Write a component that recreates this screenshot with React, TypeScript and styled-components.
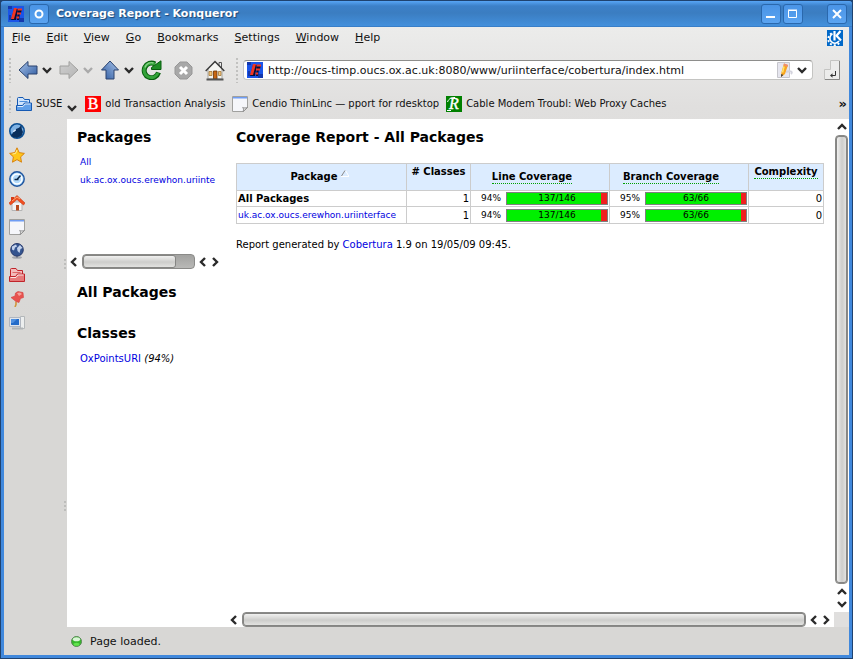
import React from "react";
import styled, { createGlobalStyle, css } from "styled-components";

const Global = createGlobalStyle`
  * { box-sizing: border-box; }
  body { margin: 0; font-family: "DejaVu Sans", sans-serif; font-size: 11px; color: #111; }
  button, input { font: inherit; color: inherit; }
  svg { display: block; flex: none; }
`;

const Desktop = styled.div`
  min-height: 100vh;
  display: flex;
  background: #1f426f;
  padding: 1px;
`;
const Window = styled.div`
  flex: 1;
  min-width: 0;
  display: flex;
  flex-direction: column;
  background: #4088dc;
  border-radius: 3px 3px 0 0;
  padding: 0 3px 3px;
`;
const TitleBar = styled.header`
  display: flex;
  align-items: center;
  gap: 2px;
  height: 26px;
  margin: 0 -3px;
  padding: 0 5px 0 7px;
  background: linear-gradient(#58a5f5 0, #3c80c8 5px, #3b7dc1 12px, #4390dc 25px, #2e6db4 26px);
  border-radius: 3px 3px 0 0;
`;
const Title = styled.h1`
  flex: 1;
  margin: 0 0 0 5px;
  font-size: 11px;
  line-height: 16px;
  color: #fff;
  text-shadow: 1px 1px 1px #1c4472;
`;
const TitleButton = styled.button<{ $gap?: number }>`
  width: 20px;
  height: 20px;
  padding: 0;
  margin-left: ${(p) => p.$gap ?? 0}px;
  display: grid;
  place-items: center;
  border: 1px solid #2a68ad;
  border-radius: 3px;
  background: linear-gradient(#4a94e6, #5ba4f1);
`;
const Chrome = styled.div`
  flex: 1;
  min-height: 0;
  display: flex;
  flex-direction: column;
  background: linear-gradient(#ececeb, #e0dfde 80px, #d8d7d5 300px);
`;
const MenuBar = styled.nav`
  display: flex;
  align-items: center;
  height: 21px;
  padding: 0 6px 0 0;
`;
const MenuButton = styled.button`
  border: 0;
  background: none;
  padding: 0 8px;
  line-height: 20px;
`;
const Spacer = styled.span`
  flex: 1;
`;
const ToolBar = styled.div`
  display: flex;
  align-items: center;
  height: 44px;
  padding: 0 8px 0 4px;
`;
const BookmarkBar = styled.div`
  display: flex;
  align-items: center;
  height: 27px;
  padding: 0 6px 4px 4px;
`;
const ToolButton = styled.button<{ $narrow?: boolean }>`
  border: 0;
  background: none;
  padding: 0;
  width: ${(p) => (p.$narrow ? "18px" : "24px")};
  height: 24px;
  display: grid;
  place-items: center;
`;
const ToolGroup = styled.div`
  display: flex;
  align-items: center;
  gap: 5px;
  padding: 0 8px 0 4px;
`;
const SplitButton = styled.div`
  display: flex;
  align-items: center;
  gap: 2px;
`;
const Actions = styled.div`
  display: flex;
  gap: 8px;
`;
const Grip = styled.span<{ $height: number }>`
  width: 4px;
  height: ${(p) => p.$height}px;
  background:
    radial-gradient(circle, #b2b2b0 1px, transparent 1px) 0 0 / 4px 4px;
  opacity: 0.7;
`;
const Address = styled.label`
  flex: 1;
  min-width: 0;
  display: flex;
  align-items: center;
  height: 20px;
  margin: 0 10px 0 4px;
  padding: 0 1px 0 3px;
  background: #fff;
  border: 1px solid #c4c4c2;
  border-top: 1px solid #8e8e8c;
  border-radius: 4px;
`;
const AddressInput = styled.input`
  flex: 1;
  min-width: 0;
  border: 0;
  outline: 0;
  padding: 0 5px;
  background: none;
`;
const Bookmark = styled.a`
  display: flex;
  align-items: center;
  gap: 4px;
  font-size: 10px;
  line-height: 16px;
  color: #111;
  text-decoration: none;
  white-space: nowrap;
  margin-right: 7px;
`;
const BookmarkMenu = styled.button`
  display: flex;
  align-items: center;
  gap: 4px;
  padding: 0;
  border: 0;
  background: none;
  font-size: 10px;
  margin: 0 8px 0 4px;
`;
const Low = styled.span`
  align-self: flex-end;
  padding-left: 1px;
`;
const OverflowButton = styled.button`
  padding: 0;
  border: 0;
  background: none;
  font-size: 13px;
  font-weight: bold;
  margin-right: -4px;
`;
const Body = styled.div`
  flex: 1;
  min-height: 0;
  display: flex;
`;
const SideBar = styled.aside`
  width: 59px;
  display: flex;
  flex-direction: column;
  gap: 8px;
  padding: 4px 5px;
`;
const Splitter = styled.div`
  width: 4px;
  display: flex;
  flex-direction: column;
  justify-content: space-around;
  padding-top: 24px;
`;
const SideButton = styled.button`
  width: 16px;
  height: 16px;
  padding: 0;
  border: 0;
  background: none;
`;
const Page = styled.div`
  flex: 1;
  min-width: 0;
  display: flex;
  background: #fff;
`;
const LeftFrames = styled.div`
  width: 156px;
  flex: none;
  color: #000;
`;
const PackagesFrame = styled.section`
  height: 150px;
  display: flex;
  flex-direction: column;
`;
const PackagesBody = styled.div`
  flex: 1;
  padding: 9px 0 0 10px;
`;
const ClassesFrame = styled.section`
  padding: 14px 0 0 10px;
`;
const ReportBody = styled.main`
  flex: 1;
  padding: 9px 10px 0 9px;
`;
const Heading = styled.h2<{ $gap: number }>`
  margin: 0 0 ${(p) => p.$gap}px;
  font-size: 14px;
  line-height: 18px;
  color: #000;
  white-space: nowrap;
`;
const linkStyle = css`
  color: #0000e0;
  text-decoration: none;
`;
const Link = styled.a<{ $small?: boolean }>`
  ${linkStyle}
  ${(p) => p.$small && "font-size: 9px;"}
`;
const LinkList = styled.ul<{ $small?: boolean }>`
  list-style: none;
  margin: 0;
  padding: 0 0 0 3px;
  font-size: ${(p) => (p.$small ? "9px" : "10px")};
  line-height: 18px;
  white-space: nowrap;
`;
const ScrollRow = styled.div<{ $inset: number }>`
  display: flex;
  align-items: center;
  height: 15px;
  padding: 0 4px 0 ${(p) => p.$inset}px;
  gap: 4px;
`;
const ScrollColumn = styled.div`
  flex: 1;
  width: 15px;
  display: flex;
  flex-direction: column;
  align-items: center;
  padding: 4px 0;
  gap: 4px;
`;
const ScrollButton = styled.button`
  padding: 0;
  border: 0;
  background: none;
  display: block;
`;
const Track = styled.div`
  flex: 1;
  align-self: stretch;
  display: flex;
  border-radius: 4px;
  background: linear-gradient(#a2a2a0, #b9b9b7);
  border: 1px solid #8a8a88;
`;
const VerticalTrack = styled(Track)`
  align-self: center;
  width: 13px;
`;
const Thumb = styled.div<{ $part: number; $vertical?: boolean }>`
  width: ${(p) => p.$part}%;
  border: 1px solid #858583;
  border-radius: 3px;
  background: linear-gradient(${(p) => (p.$vertical ? "90deg, " : "")}#f0f0ef, #cdcdcb 55%, #e2e2e0);
`;
const Content = styled.div`
  flex: 1;
  min-width: 0;
  margin-left: 4px;
  display: flex;
  flex-direction: column;
`;
const Report = styled.table`
  width: 100%;
  table-layout: fixed;
  border-collapse: collapse;
  font-size: 10px;
  line-height: 15px;
  color: #000;
`;
const Col = styled.col<{ $width?: number }>`
  ${(p) => p.$width && `width: ${p.$width}px;`}
`;
const HeadCell = styled.th<{ $top?: boolean; $inset?: number }>`
  height: 27px;
  padding: ${(p) => (p.$top ? "1px" : "0")} ${(p) => p.$inset ?? 0}px 0 0;
  border: 1px solid #ccc;
  background: #dcecff;
  line-height: 14px;
  vertical-align: ${(p) => (p.$top ? "top" : "middle")};
  white-space: nowrap;
`;
const Term = styled.span`
  padding-bottom: 1px;
  border-bottom: 1px dotted #00a000;
`;
const SortMark = styled.span`
  display: inline-block;
  vertical-align: 3px;
  padding-left: 3px;
`;
const Cell = styled.td<{ $right?: boolean; $bold?: boolean }>`
  height: 16px;
  padding: 0 1px;
  border: 1px solid #ccc;
  text-align: ${(p) => (p.$right ? "right" : "left")};
  font-weight: ${(p) => (p.$bold ? "bold" : "normal")};
  white-space: nowrap;
`;
const Coverage = styled.div`
  display: flex;
  align-items: center;
  justify-content: flex-end;
  gap: 5px;
  font-size: 9px;
`;
const Meter = styled.div`
  width: 102px;
  height: 13px;
  border: 1px solid #808080;
  text-align: center;
  line-height: 11px;
`;
const Note = styled.p`
  margin: 14px 0 0;
  font-size: 10px;
  line-height: 14px;
  color: #000;
`;
const Corner = styled.div`
  height: 15px;
  background: #e0dfde;
`;
const Side = styled.div`
  display: flex;
  flex-direction: column;
`;
const StatusBar = styled.footer`
  display: flex;
  align-items: center;
  gap: 8px;
  height: 28px;
  padding-left: 67px;
`;

const chevrons = {
  left: "M6 1 2 5l4 4",
  right: "M2 1l4 4-4 4",
  up: "M1 6l4-4 4 4",
  down: "M1 2l4 4 4-4",
};
const Chevron = ({ dir, color = "#2a2a2a" }: { dir: keyof typeof chevrons; color?: string }) => {
  const flat = dir === "up" || dir === "down";
  return (
    <svg width={flat ? 10 : 8} height={flat ? 8 : 10}>
      <path d={chevrons[dir]} fill="none" stroke={color} strokeWidth="2.4" />
    </svg>
  );
};

const Favicon = () => (
  <svg width="16" height="16" viewBox="0 0 16 16">
    <path d="M0 0h16v16H0z" fill="#1b55e8" />
    <path d="M0 0h4v3H0zM11 12h5v4h-5zM1 9h2v5H1z" fill="#1438ad" />
    <path d="M3 14 6 3h4L8 14zM10 3h4l-1 4h-1l-1 7H9z" fill="#090d35" />
    <path d="M3 13 6 2h3L6 13z" fill="#f23622" />
    <path d="M9.500 3.500H14M9 7.500h4M8.500 11.500h2.500" stroke="#f23622" strokeWidth="2" />
  </svg>
);
const KGear = () => (
  <svg width="16" height="16" viewBox="0 0 16 16">
    <path d="M0 0h16v16H0z" fill="#0068c8" />
    <path d="M5.500 3.800A5 5 0 1 0 12 11" fill="none" stroke="#fff" strokeWidth="1.600" />
    <path d="M4.700 3.300A6.300 6.300 0 1 0 13 12" fill="none" stroke="#fff" strokeWidth="1.800" strokeDasharray="2 2" />
    <path d="M7.500 1v9.500" stroke="#fff" strokeWidth="2.200" />
    <path d="M13.500 1 9.500 5.800 14 10.500" fill="none" stroke="#fff" strokeWidth="2.200" />
  </svg>
);
const Arrow = ({ kind }: { kind: "back" | "forward" | "up" }) => {
  const off = kind === "forward";
  const turn = kind === "back" ? 0 : kind === "up" ? 90 : 180;
  return (
    <svg width="20" height="20" viewBox="0 0 20 20">
      <defs>
        <linearGradient id={`arrow-${kind}`} x1="0" y1="0" x2="1" y2="1">
          <stop offset="0" stopColor={off ? "#b5b5b5" : "#a9c4ea"} />
          <stop offset="1" stopColor={off ? "#cfcfcf" : "#2c599f"} />
        </linearGradient>
      </defs>
      <path
        d="M1 10 10 1.500V6h9v8h-9v4.500z"
        transform={`rotate(${turn} 10 10)`}
        fill={`url(#arrow-${kind})`}
        stroke={off ? "#a0a09e" : "#2a436f"}
        strokeLinejoin="round"
      />
    </svg>
  );
};
const Reload = () => (
  <svg width="21" height="20" viewBox="0 0 21 20">
    <path d="M17.500 12.500A7.300 7.300 0 1 1 14 4" fill="none" stroke="#075e0d" strokeWidth="5" />
    <path d="M10.500 9.500V7.500L20 .8v8.700z" fill="#1f8d26" stroke="#075e0d" />
    <path d="M17 13A7.200 7.200 0 1 1 14 4.200" fill="none" stroke="#33a339" strokeWidth="3" />
    <path d="M4 7.500A6.500 6.500 0 0 1 12.500 3" fill="none" stroke="#86d285" strokeWidth="1.400" />
  </svg>
);
const Stop = () => (
  <svg width="19" height="19" viewBox="0 0 19 19">
    <path d="M6 1h7l5 5v7l-5 5H6l-5-5V6z" fill="#a8a8a8" stroke="#979797" />
    <path d="M6 6l7 7M13 6l-7 7" stroke="#fff" strokeWidth="3" />
  </svg>
);
const Home = () => (
  <svg width="20" height="21" viewBox="0 0 20 21">
    <path d="M14 2.500h2.500V8H14z" fill="#eee" stroke="#555" />
    <path d="M3 9 10 2l7 7v10H3z" fill="#f5f5f2" stroke="#a5a5a0" />
    <path d="M.7 11 10 1.500 19.300 11" fill="none" stroke="#3c3c3c" strokeWidth="1.500" />
    <path d="M8.500 11h3.500v8H8.500z" fill="#c96712" stroke="#693306" strokeWidth=".8" />
    <path d="M4 11.500h3v4H4zM13.500 11.500h2.500v4h-2.500z" fill="#f2c678" stroke="#a5773a" strokeWidth=".8" />
    <path d="M1.500 19.500h17" stroke="#555" strokeWidth="2" />
  </svg>
);
const Folder = ({ red }: { red?: boolean }) => {
  const dark = red ? "#c0242a" : "#1559b3";
  return (
    <svg width="16" height="16" viewBox="0 0 16 16">
      <path d="M1.500 13V2.500c0-.6.400-1 1-1H7l1.500 2h5V13z" fill={red ? "#f3bcbc" : "#cfe4fc"} stroke={dark} />
      <path d="M3.500 5.500h8" stroke={red ? "#d66" : "#4e90de"} />
      <path d="M.5 14.500V9.500h6l2-2.500h7v7.500z" fill={red ? "#e67a7a" : "#5f9fe9"} stroke={dark} />
      <path d="M1.500 10.500h5.500l2-2.500h5.500" fill="none" stroke="#fff" strokeOpacity=".8" />
    </svg>
  );
};
const Sheet = () => (
  <svg width="16" height="16" viewBox="0 0 16 16">
    <path d="M.5.5h15v11l-4 4H.5z" fill="#f5f6fa" stroke="#a0a09e" />
    <path d="M1 1h14v1.500H1z" fill="#6f9df4" />
    <path d="M11 15.500c.8-1.500.6-3-.3-4 1.500.8 3 .6 4.800 0z" fill="#fff" stroke="#888" />
  </svg>
);
const LetterTile = ({ letter, color, italic }: { letter: string; color: string; italic?: boolean }) => (
  <svg width="16" height="16" viewBox="0 0 16 16">
    <path d="M0 0h16v16H0z" fill={color} />
    {italic && <path d="M1.500 6C3 2 6 1.500 9 1.500M1 14.500h4" fill="none" stroke="#fff" />}
    <text x="8" y="13" textAnchor="middle" fontSize="16" fill="#fff" fontFamily="Liberation Serif, serif" fontStyle={italic ? "italic" : "normal"} stroke="#fff" strokeWidth=".4">
      {letter}
    </text>
  </svg>
);
const Pencil = () => (
  <svg width="16" height="16" viewBox="0 0 16 16">
    <path d="M.5.500h12v15H.5z" fill="#e6e6ef" stroke="#c6c6cc" />
    <path d="M9 10c5-2 7 0 5 2" fill="none" stroke="#d3d3dd" strokeWidth="2" />
    <path d="M7 1.500 11 3 8 12l-4 3 .5-5z" fill="#f9a51e" />
    <path d="M7 1.500 11 3l-.5 2L6.500 3.300z" fill="#ee8d72" />
    <path d="m7 4.500-1.500 6" fill="none" stroke="#ffe36b" strokeWidth="1.500" />
    <path d="m4 15 .300-3 2 1z" fill="#333" />
  </svg>
);
const Enter = () => (
  <svg width="16" height="20" viewBox="0 0 16 20">
    <path d="M6.500.500h9v19H.500v-10h6z" fill="#ececeb" stroke="#c4c4c2" />
    <path d="M15.500 1v18.500H1" fill="none" stroke="#868684" />
    <path d="M11.500 11v4.500H8" fill="none" stroke="#333" />
    <path d="m8.500 13.200-2.500 2.300 2.500 2.300z" fill="#333" />
  </svg>
);

const Wolf = () => (
  <svg width="16" height="16" viewBox="0 0 16 16">
    <circle cx="8" cy="8" r="7.200" fill="#7fb2e4" stroke="#0b4f94" strokeWidth="1.600" />
    <path d="M2 12.500 4.500 9l2.500-3 3-1.300L12.500 2l.3 4 1.200 3-1.500 4L8 15l-4-1z" fill="#0a2f5c" />
    <path d="m3.500 8.500 3-2.500.500 1.500-2 1.500z" fill="#d8eaff" />
  </svg>
);
const Star = () => (
  <svg width="16" height="16" viewBox="0 0 16 16">
    <path d="m8 .8 2.200 4.800 5.200.8-3.800 3.500.9 5.300L8 12.600 3.500 15.200l.9-5.300L.6 6.400l5.200-.8z" fill="#ffc619" stroke="#d9830f" strokeLinejoin="round" />
    <path d="m8 3-1.500 3.500-3 .5" fill="none" stroke="#fff09b" />
  </svg>
);
const Clock = () => (
  <svg width="16" height="16" viewBox="0 0 16 16">
    <circle cx="8" cy="8" r="7.200" fill="#a4d4fa" stroke="#1f559f" strokeWidth="1.400" />
    <circle cx="8" cy="8" r="5" fill="#b4dbfb" stroke="#fff" strokeWidth="1.500" />
    <path d="M11.500 4.500 8 8.500M5.500 8.500h4" stroke="#102a48" strokeWidth="1.600" />
  </svg>
);
const RedHouse = () => (
  <svg width="16" height="16" viewBox="0 0 16 16">
    <path d="M3 7h10v8.500H3z" fill="#f4f4f4" stroke="#b5b5b5" />
    <path d="M7 10h3v5.500H7z" fill="#b74b20" />
    <path d="M2 2h3v4H2z" fill="#d63c18" />
    <path d="M8 .500 16 8l-1.500 2L8 4.500 1.500 10 0 8z" fill="#f15022" stroke="#c93811" strokeWidth=".6" />
    <path d="m3 6 5-4 3 2" fill="none" stroke="#ffaa73" />
  </svg>
);
const Globe = () => (
  <svg width="16" height="16" viewBox="0 0 16 16">
    <ellipse cx="8" cy="14.500" rx="5" ry="1.300" fill="#a4a7ad" />
    <path d="M7 12h2v3H7z" fill="#888c95" />
    <circle cx="8" cy="6.800" r="6.300" fill="#34548f" stroke="#27386a" />
    <path d="M3 3.500 7 1.500l1 2-2 1-1 3-2-1zM8 5l3-3 2.500 3-2 1-1 4-2-2z" fill="#c3d2ec" />
  </svg>
);
const Pin = () => (
  <svg width="16" height="16" viewBox="0 0 16 16">
    <path d="M7 10.500v3L6 16" fill="none" stroke="#d0953c" strokeWidth="1.600" />
    <path d="M2 6.500 6 5l.5-3L9 .5l5 1 .5 5-3 1-1.500 4-3-1z" fill="#e8524e" stroke="#d24040" strokeWidth=".6" />
    <path d="m8 2 3-.5 2 1.500-3 2z" fill="#f6a09a" />
  </svg>
);
const Computer = () => (
  <svg width="16" height="16" viewBox="0 0 16 16">
    <path d="M11.500 1.500h4v12h-4z" fill="#eceeee" stroke="#b3b7b9" />
    <path d="M.5 2.500h11v9H.5z" fill="#dfe5ed" stroke="#b0b6c0" />
    <path d="M2 4h8v6H2z" fill="#246cc9" />
    <path d="M2 4h6L4 8H2z" fill="#4f90e0" />
    <path d="M3 13.500h11" stroke="#b0b4b6" strokeWidth="2" />
  </svg>
);
const Led = () => (
  <svg width="11" height="11" viewBox="0 0 11 11">
    <circle cx="5.500" cy="5.500" r="5" fill="#35b82c" stroke="#5a8557" />
    <ellipse cx="5.500" cy="3.300" rx="3.600" ry="2" fill="#d9f5d6" />
    <ellipse cx="5.500" cy="8.300" rx="3" ry="1.500" fill="#61e34e" />
  </svg>
);

const menus = ["File", "Edit", "View", "Go", "Bookmarks", "Settings", "Window", "Help"];
const sideItems: [string, React.ReactNode][] = [
  ["Amarok", <Wolf />],
  ["Bookmarks", <Star />],
  ["History", <Clock />],
  ["Home Folder", <RedHouse />],
  ["Metabar", <Sheet />],
  ["Network", <Globe />],
  ["Root Folder", <Folder red />],
  ["Services", <Pin />],
  ["System", <Computer />],
];
const rows = [
  { name: "All Packages", link: false },
  { name: "uk.ac.ox.oucs.erewhon.uriinterface", link: true },
];

const MeterBar = ({ rate, text }: { rate: number; text: string }) => (
  <Coverage>
    <span>{rate}%</span>
    <Meter style={{ background: `linear-gradient(90deg, #00f000 ${rate}%, #f02020 ${rate}%)` }}>{text}</Meter>
  </Coverage>
);

const HorizontalScroll = ({ part, inset }: { part: number; inset: number }) => (
  <ScrollRow $inset={inset}>
    <ScrollButton aria-label="Scroll left"><Chevron dir="left" /></ScrollButton>
    <Track><Thumb $part={part} /></Track>
    <ScrollButton aria-label="Scroll back"><Chevron dir="left" /></ScrollButton>
    <ScrollButton aria-label="Scroll right"><Chevron dir="right" /></ScrollButton>
  </ScrollRow>
);

export default function App() {
  return (
    <Desktop>
      <Global />
      <Window>
        <TitleBar>
          <Favicon />
          <TitleButton aria-label="Window menu" $gap={3}>
            <svg width="10" height="10"><circle cx="5" cy="5" r="3.500" fill="none" stroke="#fff" strokeWidth="2" /></svg>
          </TitleButton>
          <Title>Coverage Report - Konqueror</Title>
          <TitleButton aria-label="Minimize">
            <svg width="10" height="10"><path d="M0 8h9" stroke="#fff" strokeWidth="2" /></svg>
          </TitleButton>
          <TitleButton aria-label="Maximize">
            <svg width="10" height="10"><path d="M.5 1.500h8v7h-8zM0 1h9" fill="none" stroke="#fff" /></svg>
          </TitleButton>
          <TitleButton aria-label="Close" $gap={22}>
            <svg width="10" height="10"><path d="m1 1 8 8M9 1 1 9" stroke="#fff" strokeWidth="2" /></svg>
          </TitleButton>
        </TitleBar>
        <Chrome>
          <MenuBar>
            {menus.map((m) => (
              <MenuButton key={m}><u>{m[0]}</u>{m.slice(1)}</MenuButton>
            ))}
            <Spacer />
            <KGear />
          </MenuBar>
          <ToolBar>
            <Grip $height={26} />
            <ToolGroup>
              <SplitButton>
                <ToolButton aria-label="Back"><Arrow kind="back" /></ToolButton>
                <Chevron dir="down" />
              </SplitButton>
              <SplitButton>
                <ToolButton aria-label="Forward"><Arrow kind="forward" /></ToolButton>
                <Chevron dir="down" color="#aaa" />
              </SplitButton>
              <SplitButton>
                <ToolButton aria-label="Up"><Arrow kind="up" /></ToolButton>
                <Chevron dir="down" />
              </SplitButton>
              <Actions>
                <ToolButton aria-label="Reload"><Reload /></ToolButton>
                <ToolButton aria-label="Stop"><Stop /></ToolButton>
                <ToolButton aria-label="Home"><Home /></ToolButton>
              </Actions>
            </ToolGroup>
            <Grip $height={26} />
            <Address>
              <Favicon />
              <AddressInput aria-label="Location" defaultValue="http://oucs-timp.oucs.ox.ac.uk:8080/www/uriinterface/cobertura/index.html" />
              <Pencil />
              <ToolButton $narrow aria-label="Location history"><Chevron dir="down" /></ToolButton>
            </Address>
            <ToolButton $narrow aria-label="Go"><Enter /></ToolButton>
          </ToolBar>
          <BookmarkBar>
            <Grip $height={18} />
            <BookmarkMenu>
              <Folder />SUSE<Low><Chevron dir="down" /></Low>
            </BookmarkMenu>
            <Bookmark href="#transaction"><LetterTile letter="B" color="#f00" />old Transaction Analysis</Bookmark>
            <Bookmark href="#cendio"><Sheet />Cendio ThinLinc — pport for rdesktop</Bookmark>
            <Bookmark href="#cable"><LetterTile letter="R" color="#008000" italic />Cable Modem Troubl: Web Proxy Caches</Bookmark>
            <Spacer />
            <OverflowButton aria-label="More bookmarks">»</OverflowButton>
          </BookmarkBar>
          <Body>
            <SideBar>
              {sideItems.map(([label, icon]) => (
                <SideButton key={label} aria-label={label}>{icon}</SideButton>
              ))}
            </SideBar>
            <Splitter>
              <Grip $height={12} />
              <Grip $height={12} />
            </Splitter>
            <Page>
              <LeftFrames>
                <PackagesFrame>
                  <PackagesBody>
                    <Heading $gap={7}>Packages</Heading>
                    <LinkList $small>
                      <li><Link href="#all">All</Link></li>
                      <li><Link href="#uri">uk.ac.ox.oucs.erewhon.uriinte</Link></li>
                    </LinkList>
                  </PackagesBody>
                  <HorizontalScroll part={84} inset={3} />
                </PackagesFrame>
                <ClassesFrame>
                  <Heading $gap={23}>All Packages</Heading>
                  <Heading $gap={8}>Classes</Heading>
                  <LinkList><li><Link href="#ox">OxPointsURI</Link> <i>(94%)</i></li></LinkList>
                </ClassesFrame>
              </LeftFrames>
              <Content>
                <ReportBody>
                  <Heading $gap={17}>Coverage Report - All Packages</Heading>
                  <Report>
                    <colgroup>
                      <Col /><Col $width={64} /><Col $width={139} /><Col $width={139} /><Col $width={75} />
                    </colgroup>
                    <thead>
                      <tr>
                        <HeadCell $inset={4}>Package<SortMark><svg width="8" height="7"><path d="M0 6.500h8L4.500.5" fill="none" stroke="#fff" /><path d="M.5 6 4 .5" stroke="#888" /></svg></SortMark></HeadCell>
                        <HeadCell $top># Classes</HeadCell>
                        <HeadCell $inset={16}><Term>Line Coverage</Term></HeadCell>
                        <HeadCell $inset={16}><Term>Branch Coverage</Term></HeadCell>
                        <HeadCell $top><Term>Complexity</Term></HeadCell>
                      </tr>
                    </thead>
                    <tbody>
                      {rows.map((r) => (
                        <tr key={r.name}>
                          <Cell $bold={!r.link}>{r.link ? <Link $small href="#package">{r.name}</Link> : r.name}</Cell>
                          <Cell $right>1</Cell>
                          <Cell><MeterBar rate={94} text="137/146" /></Cell>
                          <Cell><MeterBar rate={95} text="63/66" /></Cell>
                          <Cell $right>0</Cell>
                        </tr>
                      ))}
                    </tbody>
                  </Report>
                  <Note>Report generated by <Link href="#cobertura">Cobertura</Link> 1.9 on 19/05/09 09:45.</Note>
                </ReportBody>
                <HorizontalScroll part={100} inset={3} />
              </Content>
              <Side>
                <ScrollColumn>
                  <ScrollButton aria-label="Scroll up"><Chevron dir="up" /></ScrollButton>
                  <VerticalTrack><Thumb $part={100} $vertical /></VerticalTrack>
                  <ScrollButton aria-label="Scroll back up"><Chevron dir="up" /></ScrollButton>
                  <ScrollButton aria-label="Scroll down"><Chevron dir="down" /></ScrollButton>
                </ScrollColumn>
                <Corner />
              </Side>
            </Page>
          </Body>
          <StatusBar role="status"><Led />Page loaded.</StatusBar>
        </Chrome>
      </Window>
    </Desktop>
  );
}
